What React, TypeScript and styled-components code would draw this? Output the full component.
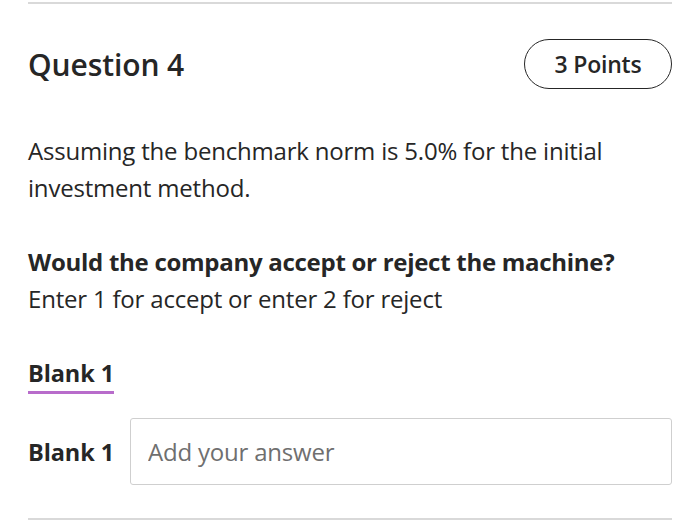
import React from "react";
import styled, { createGlobalStyle } from "styled-components";

const Global = createGlobalStyle`
  html, body { margin: 0; padding: 0; background: #fff; }
  body { font-family: "Open Sans", "Noto Sans", sans-serif; color: #262626; }
`;

const Page = styled.div`
  width: 700px;
  height: 527px;
  box-sizing: border-box;
  padding: 2px 28px 0 28px;
  display: flex;
  flex-direction: column;
`;

const Rule = styled.hr`
  border: none;
  border-top: 2px solid #d9d9d9;
  margin: 0;
  width: 100%;
`;

const Header = styled.div`
  display: flex;
  justify-content: space-between;
  align-items: center;
  margin-top: 35px;
  height: 50px;
`;

const Title = styled.h2`
  margin: 0;
  font-size: 30px;
  font-weight: 600;
  color: #262626;
  letter-spacing: -0.1px;
`;

const Pill = styled.span`
  display: inline-flex;
  align-items: center;
  justify-content: center;
  box-sizing: border-box;
  width: 148px;
  height: 50px;
  border: 1.5px solid #262626;
  border-radius: 25px;
  font-size: 23px;
  font-weight: 600;
  color: #262626;
  letter-spacing: -0.2px;
`;

const Para = styled.p<{ $bold?: boolean; $mt?: number }>`
  margin: ${(p) => p.$mt ?? 0}px 0 0 0;
  font-size: 24px;
  line-height: 37px;
  font-weight: ${(p) => (p.$bold ? 700 : 400)};
  color: #262626;
  letter-spacing: ${(p) => (p.$bold ? "-0.28px" : "-0.2px")};
`;

const Tabs = styled.div`
  display: flex;
  margin-top: 40px;
`;

const Tab = styled.div`
  font-size: 23.5px;
  font-weight: 700;
  line-height: 32px;
  padding-bottom: 2px;
  border-bottom: 3px solid #b86ccb;
  letter-spacing: -0.1px;
`;

const Row = styled.div`
  display: flex;
  align-items: center;
  gap: 16px;
  margin-top: 24px;
`;

const Label = styled.label`
  font-size: 23.5px;
  font-weight: 700;
  letter-spacing: -0.1px;
`;

const Input = styled.input`
  flex: 1;
  height: 67px;
  box-sizing: border-box;
  border: 1.5px solid #cfcfcf;
  border-radius: 3px;
  padding: 0 17px;
  font-family: "Open Sans", sans-serif;
  font-size: 24px;
  color: #262626;
  letter-spacing: -0.2px;
  outline: none;
  &::placeholder { color: #6f6f6f; }
`;

const BottomRule = styled(Rule)`
  margin-top: 33px;
`;

export default function App() {
  return (
    <>
      <Global />
      <Page>
        <Rule />
        <Header>
          <Title>Question 4</Title>
          <Pill>3 Points</Pill>
        </Header>
        <Para $mt={43}>
          Assuming the benchmark norm is 5.0% for the initial investment method.
        </Para>
        <Para $bold $mt={37}>Would the company accept or reject the machine?</Para>
        <Para>Enter 1 for accept or enter 2 for reject</Para>
        <Tabs>
          <Tab>Blank 1</Tab>
        </Tabs>
        <Row>
          <Label>Blank 1</Label>
          <Input placeholder="Add your answer" />
        </Row>
        <BottomRule />
      </Page>
    </>
  );
}
